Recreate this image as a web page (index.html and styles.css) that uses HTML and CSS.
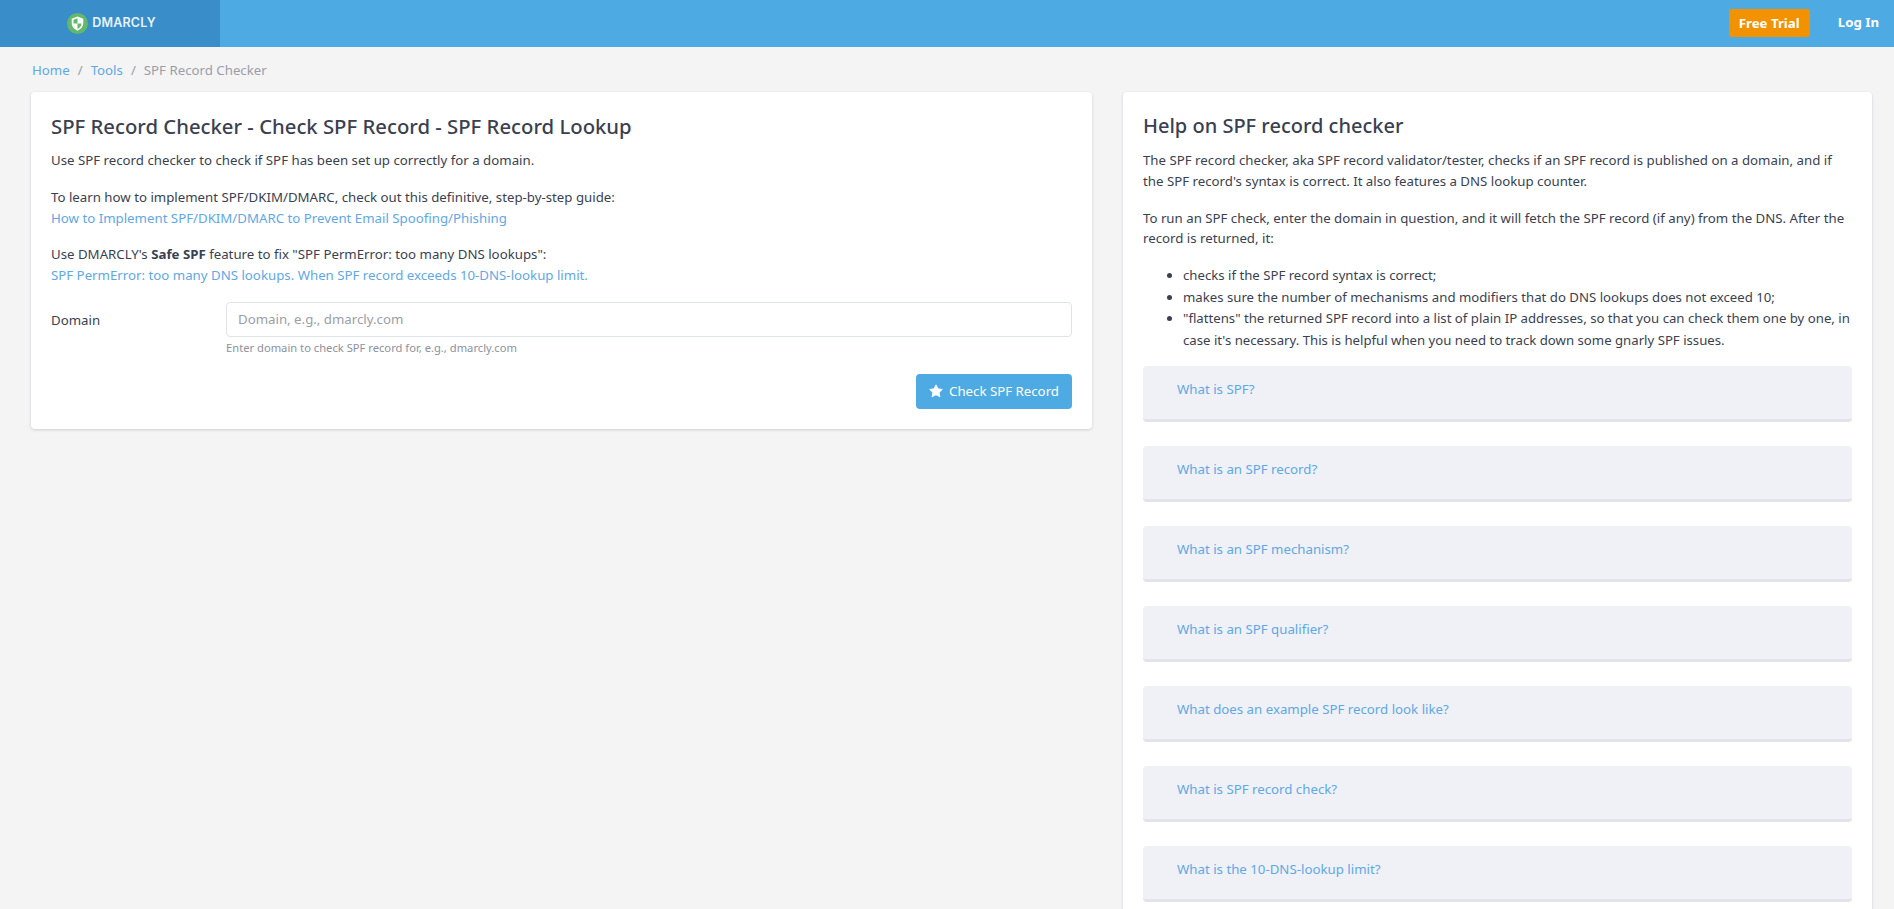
FILE: index.html
```html
<!DOCTYPE html>
<html lang="en">
  <head>
    <meta charset="UTF-8" />
    <meta name="viewport" content="width=device-width, initial-scale=1.0" />
    <title>SPF Record Checker</title>
    <link rel="stylesheet" href="styles.css">
  </head>
  <body>
    <header class="topbar">
      <a class="brand" href="#">
        <svg class="brand-icon" viewBox="0 0 24 24" aria-hidden="true">
          <circle cx="12" cy="12" r="12" fill="#62b96b"/>
          <path d="M12 4 L18.6 6.5 V11.5 C18.6 15.6 15.9 18.6 12 20.2 C8.1 18.6 5.4 15.6 5.4 11.5 V6.5 Z" fill="#fff"/>
          <path d="M12 6 V12 H7.4 V7.8 Z M12 12 H16.6 C16.4 15 14.6 17.1 12 18.2 Z" fill="#62b96b"/>
        </svg>
        <span class="brand-name">DMARCLY</span>
      </a>
      <nav class="topnav">
        <a class="btn-trial" href="#">Free Trial</a>
        <a class="login" href="#">Log In</a>
      </nav>
    </header>

    <main class="page">
      <div class="breadcrumb">
        <a href="#">Home</a>
        <span class="sep">/</span>
        <a href="#">Tools</a>
        <span class="sep">/</span>
        <span class="current">SPF Record Checker</span>
      </div>

      <div class="columns">
        <section class="card card-tool">
          <h1>SPF Record Checker - Check SPF Record - SPF Record Lookup</h1>
          <p>Use SPF record checker to check if SPF has been set up correctly for a domain.</p>
          <p>To learn how to implement SPF/DKIM/DMARC, check out this definitive, step-by-step guide:<br>
            <a href="#">How to Implement SPF/DKIM/DMARC to Prevent Email Spoofing/Phishing</a></p>
          <p>Use DMARCLY's <strong>Safe SPF</strong> feature to fix "SPF PermError: too many DNS lookups":<br>
            <a href="#">SPF PermError: too many DNS lookups. When SPF record exceeds 10-DNS-lookup limit.</a></p>

          <form class="domain-form">
            <label for="domain">Domain</label>
            <div class="field">
              <input id="domain" type="text" placeholder="Domain, e.g., dmarcly.com">
              <small>Enter domain to check SPF record for, e.g., dmarcly.com</small>
            </div>
          </form>
          <div class="form-actions">
            <button class="btn-check" type="button">
              <svg class="star" viewBox="0 0 24 24" aria-hidden="true">
                <path d="M12 1.5 L15.3 8.3 L22.8 9.3 L17.3 14.5 L18.7 22 L12 18.4 L5.3 22 L6.7 14.5 L1.2 9.3 L8.7 8.3 Z" stroke="#fff" stroke-width="1.5" stroke-linejoin="round" fill="#fff"/>
              </svg>
              Check SPF Record
            </button>
          </div>
        </section>

        <section class="card card-help">
          <h2>Help on SPF record checker</h2>
          <p>The SPF record checker, aka SPF record validator/tester, checks if an SPF record is published on a domain, and if the SPF record's syntax is correct. It also features a DNS lookup counter.</p>
          <p>To run an SPF check, enter the domain in question, and it will fetch the SPF record (if any) from the DNS. After the record is returned, it:</p>
          <ul>
            <li>checks if the SPF record syntax is correct;</li>
            <li>makes sure the number of mechanisms and modifiers that do DNS lookups does not exceed 10;</li>
            <li>"flattens" the returned SPF record into a list of plain IP addresses, so that you can check them one by one, in case it's necessary. This is helpful when you need to track down some gnarly SPF issues.</li>
          </ul>
          <div class="faq"><a href="#">What is SPF?</a></div>
          <div class="faq"><a href="#">What is an SPF record?</a></div>
          <div class="faq"><a href="#">What is an SPF mechanism?</a></div>
          <div class="faq"><a href="#">What is an SPF qualifier?</a></div>
          <div class="faq"><a href="#">What does an example SPF record look like?</a></div>
          <div class="faq"><a href="#">What is SPF record check?</a></div>
          <div class="faq"><a href="#">What is the 10-DNS-lookup limit?</a></div>
        </section>
      </div>
    </main>
  </body>
</html>
```

FILE: styles.css
```css
:root {
  --blue: #4eaae3;
  --blue-dark: #398dc8;
  --link: #5fa8e6;
  --text: #3a3f51;
}

html,
body {
  height: 100%;
  overflow: hidden;
}

body {
  margin: 0;
  font-family: "Noto Sans", "Open Sans", sans-serif;
  font-size: 13.25px;
  line-height: 20.8px;
  background: #f4f4f4;
  color: var(--text);
}

a {
  color: var(--link);
  text-decoration: none;
}

/* Top bar */
.topbar {
  display: flex;
  justify-content: space-between;
  align-items: center;
  height: 47px;
  background: var(--blue);
}

.brand {
  display: flex;
  align-items: center;
  justify-content: center;
  gap: 4px;
  width: 220px;
  height: 100%;
  padding-left: 3px;
  box-sizing: border-box;
  background: var(--blue-dark);
}

.brand-icon {
  width: 21px;
  height: 21px;
}

.brand-name {
  color: #e8f3fa;
  font-family: Inter, "Noto Sans", sans-serif;
  font-size: 12.5px;
  font-weight: 600;
  letter-spacing: 0.2px;
}

.topnav {
  display: flex;
  align-items: center;
  gap: 28px;
  padding: 0 15px 2px 0;
}

.btn-trial {
  background: #f39200;
  color: #fff;
  font-weight: 700;
  line-height: 28px;
  padding: 0 10px;
  border-radius: 3px;
}

.login {
  color: #fff;
  font-weight: 700;
}

/* Page */
.page {
  padding: 13px 22px 0 31px;
}

.breadcrumb {
  display: flex;
  gap: 8px;
  height: 21px;
  margin-bottom: 11px;
  padding-left: 1px;
}

.sep,
.current {
  color: #9a9ea8;
}

.columns {
  display: grid;
  grid-template-columns: 1061px 749px;
  gap: 31px;
  align-items: start;
}

.card {
  background: #fff;
  border-radius: 4px;
  box-shadow: 0 1px 3px rgba(60, 60, 90, 0.2);
  padding: 20px;
}

.card h1,
.card h2 {
  margin: 0 0 10px;
  font-size: 20.3px;
  line-height: 28px;
  font-weight: 500;
}

.card h2 {
  font-size: 20px;
}

.card p {
  margin: 0 0 16px;
}

/* Form */
.domain-form {
  display: flex;
  margin-top: 4px;
}

.domain-form label {
  width: 175px;
  line-height: 35px;
  padding-top: 1px;
}

.field {
  flex: 1;
}

.field input {
  display: block;
  width: 100%;
  height: 35px;
  box-sizing: border-box;
  padding: 0 11px;
  border: 1px solid #e2e3e8;
  border-radius: 4px;
  font: inherit;
  color: var(--text);
}

.field input::placeholder {
  color: #9a9ea8;
}

.field small {
  display: block;
  margin-top: 1px;
  font-size: 11.2px;
  color: #8d919c;
}

.form-actions {
  display: flex;
  justify-content: flex-end;
  margin-top: 15px;
}

.btn-check {
  display: flex;
  align-items: center;
  gap: 6px;
  height: 35px;
  padding: 0 13px 0 13px;
  border: none;
  border-radius: 4px;
  background: var(--blue);
  color: #fff;
  font: inherit;
}

.star {
  width: 14px;
  height: 14px;
}

/* Help column */
.card-help ul {
  margin: 0 0 14px;
  padding-left: 40px;
  font-size: 13.2px;
  line-height: 21.6px;
}

.faq {
  height: 56px;
  margin-bottom: 24px;
  padding: 13px 34px 0;
  box-sizing: border-box;
  background: #f0f1f6;
  border-bottom: 3px solid #e3e4ea;
  border-radius: 4px;
}
```
